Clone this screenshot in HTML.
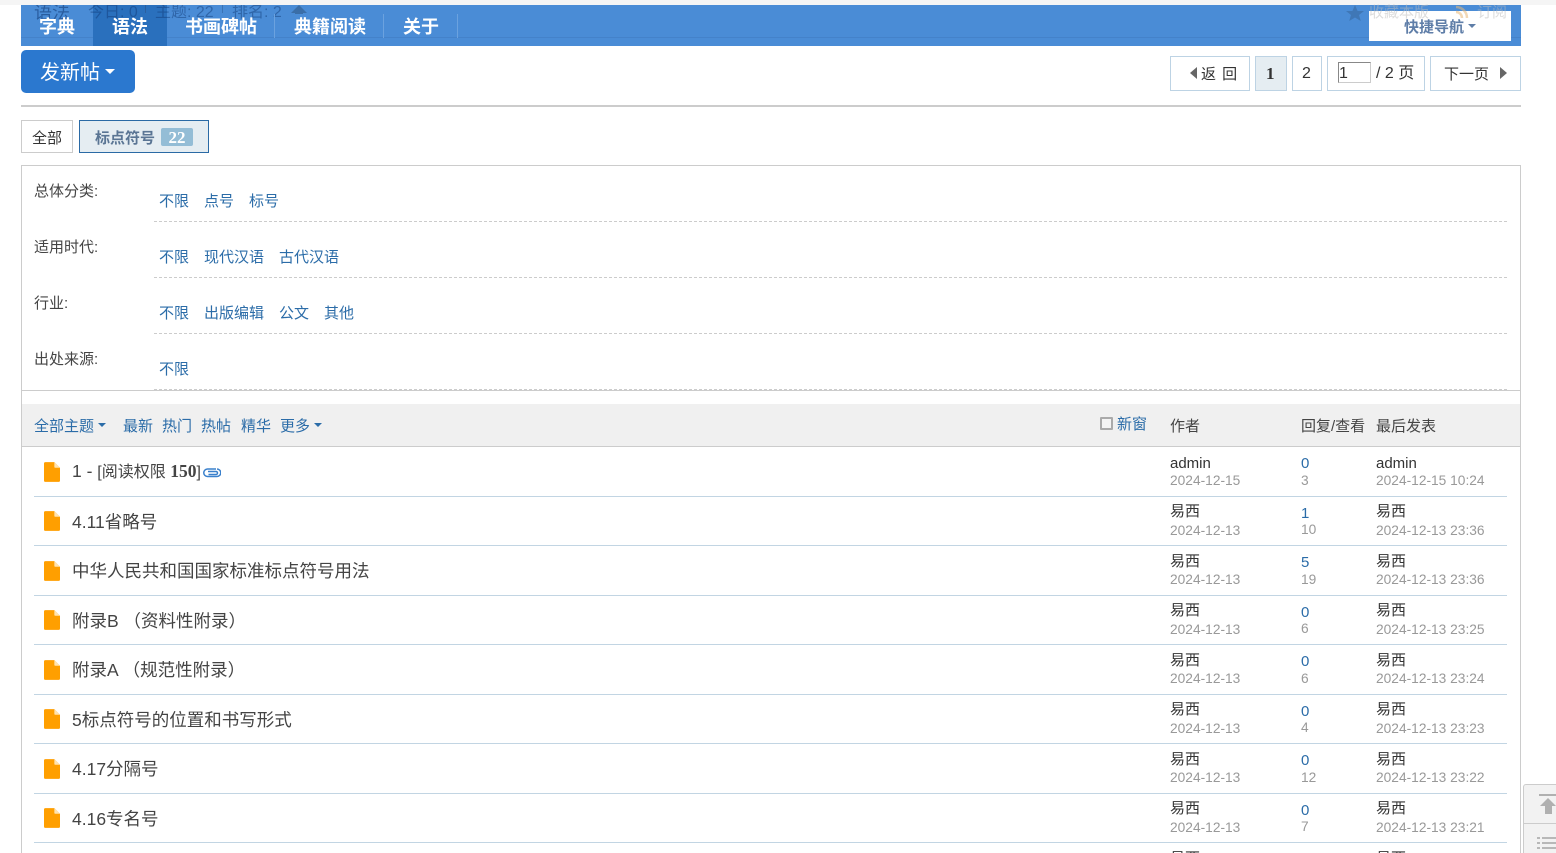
<!DOCTYPE html>
<html lang="zh"><head><meta charset="utf-8"><title>语法</title>
<style>
html,body{margin:0;padding:0;background:#fff;width:1556px;height:853px;overflow:hidden}
#w{position:relative;width:1556px;height:853px;overflow:hidden;font-family:"Liberation Sans","Noto Sans CJK SC",sans-serif;color:#333}
.a,.t{position:absolute;white-space:nowrap}
.t{line-height:20px;margin-top:1px}
.nav{color:#fff;font-weight:700;font-size:18px;line-height:26px;top:14px}
.b{position:absolute;box-sizing:border-box;border:1px solid #bdd3e4;background:#fff}
.lk{color:#2b6ca8;font-size:15px}
.lb{color:#444;font-size:15px}
.dash{position:absolute;left:154px;width:1353px;border-top:1px dashed #ccc}
.sep{position:absolute;left:34px;width:1473px;height:1px;background:#c2d5e3}
.ti{font-size:17.5px;color:#444;left:72px;line-height:26px}
.u{font-size:15px;color:#333}
.d{font-size:13.75px;color:#999}
.n{font-size:15px;color:#2b6ca8}
.h{font-size:16px;color:rgba(15,55,115,.45)}
.g{font-size:15px;color:rgba(187,187,187,.5)}
svg{position:absolute;display:block}
</style></head><body><div id="w">
<div class="a" style="left:21px;top:5px;width:1500px;height:41px;background:#4a8cd6"></div>
<div class="a" style="left:21px;top:37px;width:1500px;height:1px;background:#4482ca"></div>
<div class="a" style="left:93px;top:5px;width:74px;height:41px;background:#2a70bd"></div>
<div class="t" style="left:34px;top:2px;font-size:18px;color:rgba(15,55,115,.55)">语法</div>
<div class="t h" style="left:88px;top:2px">今日: 0</div>
<div class="t h" style="left:155px;top:2px">主题: 22</div>
<div class="t h" style="left:232px;top:2px">排名: 2</div>
<div class="a" style="left:145px;top:5px;width:1px;height:8px;background:#2a5f9f"></div>
<div class="a" style="left:222px;top:5px;width:1px;height:8px;background:#3a73b5"></div>
<svg style="left:290px;top:5px" width="18" height="9"><path d="M9 0L17 8H13V9H5V8H1Z" fill="#3a6ea8"/></svg>
<div class="a" style="left:0;top:0;width:1556px;height:5px;background:#f5f5f5"></div>
<div class="a nav" style="left:39px">字典</div>
<div class="a nav" style="left:112px">语法</div>
<div class="a nav" style="left:185px">书画碑帖</div>
<div class="a nav" style="left:294px">典籍阅读</div>
<div class="a nav" style="left:403px">关于</div>
<div class="a" style="left:274px;top:14px;width:1px;height:24px;background:#6ba2df"></div>
<div class="a" style="left:383px;top:14px;width:1px;height:24px;background:#6ba2df"></div>
<div class="a" style="left:457px;top:14px;width:1px;height:24px;background:#6ba2df"></div>
<svg style="left:1346px;top:4px" width="18" height="17"><path d="M9 1L11.600 7H18L13 11L14.800 17L9 13.500L3.200 17L5 11L0 7H6.400Z" fill="#3f77b6"/></svg>
<div class="a" style="left:1369px;top:11px;width:142px;height:30px;background:#fff"></div>
<div class="t g" style="left:1369px;top:2px">收藏本版</div>
<div class="t g" style="left:1477px;top:2px">订阅</div>
<svg style="left:1456px;top:5px" width="14" height="13"><path d="M0 2A11 11 0 0 1 11 13M0 7A6 6 0 0 1 6 13" stroke="#e8b878" stroke-opacity=".55" stroke-width="2.500" fill="none"/></svg>
<div class="t" style="left:1404px;top:17px;font-size:15px;font-weight:700;color:#5f7ea8">快捷导航</div>
<svg style="left:1468px;top:24px" width="8" height="4"><path d="M0 0H8L4 4Z" fill="#5f7ea8"/></svg>

<div class="a" style="left:21px;top:50px;width:114px;height:43px;background:#2b78cf;border-radius:5px"></div>
<div class="t" style="left:40px;top:62px;font-size:20px;color:#fff">发新帖</div>
<svg style="left:105px;top:69px" width="10" height="5"><path d="M0 0H10L5 5Z" fill="#fff"/></svg>

<div class="b" style="left:1170px;top:56px;width:80px;height:35px"></div>
<svg style="left:1190px;top:67px" width="7" height="12"><path d="M7 0V12L0 6Z" fill="#666"/></svg>
<div class="t" style="left:1201px;top:64px;font-size:15px;letter-spacing:1px">返 回</div>
<div class="b" style="left:1255px;top:56px;width:32px;height:35px;background:#e5edf2"></div>
<div class="t" style="left:1266px;top:63px;font-size:17px;font-weight:700;font-family:'Liberation Serif',serif">1</div>
<div class="b" style="left:1292px;top:56px;width:30px;height:35px"></div>
<div class="t" style="left:1302px;top:63px;font-size:16px">2</div>
<div class="b" style="left:1327px;top:56px;width:98px;height:35px"></div>
<div class="a" style="left:1338px;top:62px;width:33px;height:21px;box-sizing:border-box;border:1px solid #ccc;border-left-color:#888;border-top-color:#888"></div>
<div class="t" style="left:1339px;top:63px;font-size:16px">1</div>
<div class="t" style="left:1376px;top:63px;font-size:16px">/ 2 页</div>
<div class="b" style="left:1430px;top:56px;width:91px;height:35px"></div>
<div class="t" style="left:1444px;top:64px;font-size:15px">下一页</div>
<svg style="left:1500px;top:67px" width="7" height="12"><path d="M0 0V12L7 6Z" fill="#666"/></svg>

<div class="a" style="left:21px;top:105px;width:1500px;height:2px;background:#ccc"></div>

<div class="a" style="left:21px;top:120px;width:52px;height:33px;box-sizing:border-box;border:1px solid #ccc"></div>
<div class="t" style="left:32px;top:128px;font-size:15px">全部</div>
<div class="a" style="left:79px;top:120px;width:130px;height:33px;box-sizing:border-box;border:1px solid #2a6aa5;background:#e5edf2"></div>
<div class="t" style="left:95px;top:128px;font-size:15px;font-weight:700;color:#5a7594">标点符号</div>
<div class="a" style="left:161px;top:128px;width:32px;height:18px;background:#94bdd6;border-radius:2px;color:#fff;font-weight:700;font-size:17px;line-height:19px;text-align:center;font-family:'Liberation Serif',serif">22</div>

<div class="a" style="left:21px;top:165px;width:1500px;height:688px;box-sizing:border-box;border:1px solid #ccc;border-bottom:none"></div>

<div class="t lb" style="left:34px;top:181px">总体分类:</div>
<div class="t lk" style="left:159px;top:191px">不限</div><div class="t lk" style="left:204px;top:191px">点号</div><div class="t lk" style="left:249px;top:191px">标号</div>
<div class="dash" style="top:221px"></div>
<div class="t lb" style="left:34px;top:237px">适用时代:</div>
<div class="t lk" style="left:159px;top:247px">不限</div><div class="t lk" style="left:204px;top:247px">现代汉语</div><div class="t lk" style="left:279px;top:247px">古代汉语</div>
<div class="dash" style="top:277px"></div>
<div class="t lb" style="left:34px;top:293px">行业:</div>
<div class="t lk" style="left:159px;top:303px">不限</div><div class="t lk" style="left:204px;top:303px">出版编辑</div><div class="t lk" style="left:279px;top:303px">公文</div><div class="t lk" style="left:324px;top:303px">其他</div>
<div class="dash" style="top:333px"></div>
<div class="t lb" style="left:34px;top:349px">出处来源:</div>
<div class="t lk" style="left:159px;top:359px">不限</div>
<div class="dash" style="top:389px"></div>
<div class="a" style="left:22px;top:390px;width:1498px;height:1px;background:#ccc"></div>

<div class="a" style="left:22px;top:404px;width:1498px;height:42px;background:#f0f0f0"></div>
<div class="a" style="left:22px;top:446px;width:1498px;height:1px;background:#ccc"></div>
<div class="t lk" style="left:34px;top:416px">全部主题</div>
<svg style="left:98px;top:423px" width="8" height="4"><path d="M0 0H8L4 4Z" fill="#2b6ca8"/></svg>
<div class="t lk" style="left:123px;top:416px">最新</div>
<div class="t lk" style="left:162px;top:416px">热门</div>
<div class="t lk" style="left:201px;top:416px">热帖</div>
<div class="t lk" style="left:241px;top:416px">精华</div>
<div class="t lk" style="left:280px;top:416px">更多</div>
<svg style="left:314px;top:423px" width="8" height="4"><path d="M0 0H8L4 4Z" fill="#2b6ca8"/></svg>
<div class="a" style="left:1100px;top:417px;width:13px;height:13px;box-sizing:border-box;border:2px solid #aaa;border-radius:1px;background:#f4f4f4"></div>
<div class="t lk" style="left:1117px;top:414px">新窗</div>
<div class="t lb" style="left:1170px;top:416px">作者</div>
<div class="t lb" style="left:1301px;top:416px">回复/查看</div>
<div class="t lb" style="left:1376px;top:416px">最后发表</div>

<div class="sep" style="top:496px"></div><div class="sep" style="top:545px"></div><div class="sep" style="top:595px"></div><div class="sep" style="top:644px"></div><div class="sep" style="top:694px"></div><div class="sep" style="top:743px"></div><div class="sep" style="top:793px"></div><div class="sep" style="top:842px"></div>

<svg style="left:44px;top:462px" width="16" height="20" viewBox="0 0 17 21"><path d="M1.500 0H11L17 6V19.500A1.500 1.500 0 0 1 15.500 21H1.500A1.500 1.500 0 0 1 0 19.500V1.500A1.500 1.500 0 0 1 1.500 0Z" fill="#ff9f00"/><path d="M11 0L17 6H12A1 1 0 0 1 11 5Z" fill="#ffe3b0"/></svg>
<svg style="left:44px;top:511px" width="16" height="20" viewBox="0 0 17 21"><path d="M1.500 0H11L17 6V19.500A1.500 1.500 0 0 1 15.500 21H1.500A1.500 1.500 0 0 1 0 19.500V1.500A1.500 1.500 0 0 1 1.500 0Z" fill="#ff9f00"/><path d="M11 0L17 6H12A1 1 0 0 1 11 5Z" fill="#ffe3b0"/></svg>
<svg style="left:44px;top:561px" width="16" height="20" viewBox="0 0 17 21"><path d="M1.500 0H11L17 6V19.500A1.500 1.500 0 0 1 15.500 21H1.500A1.500 1.500 0 0 1 0 19.500V1.500A1.500 1.500 0 0 1 1.500 0Z" fill="#ff9f00"/><path d="M11 0L17 6H12A1 1 0 0 1 11 5Z" fill="#ffe3b0"/></svg>
<svg style="left:44px;top:610px" width="16" height="20" viewBox="0 0 17 21"><path d="M1.500 0H11L17 6V19.500A1.500 1.500 0 0 1 15.500 21H1.500A1.500 1.500 0 0 1 0 19.500V1.500A1.500 1.500 0 0 1 1.500 0Z" fill="#ff9f00"/><path d="M11 0L17 6H12A1 1 0 0 1 11 5Z" fill="#ffe3b0"/></svg>
<svg style="left:44px;top:660px" width="16" height="20" viewBox="0 0 17 21"><path d="M1.500 0H11L17 6V19.500A1.500 1.500 0 0 1 15.500 21H1.500A1.500 1.500 0 0 1 0 19.500V1.500A1.500 1.500 0 0 1 1.500 0Z" fill="#ff9f00"/><path d="M11 0L17 6H12A1 1 0 0 1 11 5Z" fill="#ffe3b0"/></svg>
<svg style="left:44px;top:709px" width="16" height="20" viewBox="0 0 17 21"><path d="M1.500 0H11L17 6V19.500A1.500 1.500 0 0 1 15.500 21H1.500A1.500 1.500 0 0 1 0 19.500V1.500A1.500 1.500 0 0 1 1.500 0Z" fill="#ff9f00"/><path d="M11 0L17 6H12A1 1 0 0 1 11 5Z" fill="#ffe3b0"/></svg>
<svg style="left:44px;top:759px" width="16" height="20" viewBox="0 0 17 21"><path d="M1.500 0H11L17 6V19.500A1.500 1.500 0 0 1 15.500 21H1.500A1.500 1.500 0 0 1 0 19.500V1.500A1.500 1.500 0 0 1 1.500 0Z" fill="#ff9f00"/><path d="M11 0L17 6H12A1 1 0 0 1 11 5Z" fill="#ffe3b0"/></svg>
<svg style="left:44px;top:808px" width="16" height="20" viewBox="0 0 17 21"><path d="M1.500 0H11L17 6V19.500A1.500 1.500 0 0 1 15.500 21H1.500A1.500 1.500 0 0 1 0 19.500V1.500A1.500 1.500 0 0 1 1.500 0Z" fill="#ff9f00"/><path d="M11 0L17 6H12A1 1 0 0 1 11 5Z" fill="#ffe3b0"/></svg>

<div class="a ti" style="top:458px">1 - <span style="font-size:16px">[阅读权限 <b style="font-family:'Liberation Serif',serif;font-size:17.500px">150</b>]</span></div>
<svg style="left:203px;top:467px" width="18" height="12"><path d="M5 4.500H13A1.500 1.500 0 0 1 13 7.500H5.500" fill="none" stroke="#3a80cc" stroke-width="1.500"/><path d="M13 2H4.500A3.500 3.500 0 0 0 4.500 9.500H14A3 3 0 0 0 14 2" fill="none" stroke="#3a80cc" stroke-width="1.500"/></svg>
<div class="a ti" style="top:509px">4.11省略号</div>
<div class="a ti" style="top:558px">中华人民共和国国家标准标点符号用法</div>
<div class="a ti" style="top:608px">附录B （资料性附录）</div>
<div class="a ti" style="top:657px">附录A （规范性附录）</div>
<div class="a ti" style="top:707px">5标点符号的位置和书写形式</div>
<div class="a ti" style="top:756px">4.17分隔号</div>
<div class="a ti" style="top:806px">4.16专名号</div>

<div class="t u" style="left:1170px;top:453px">admin</div><div class="t d" style="left:1170px;top:470px">2024-12-15</div><div class="t n" style="left:1301px;top:453px">0</div><div class="t d" style="left:1301px;top:470px">3</div><div class="t u" style="left:1376px;top:453px">admin</div><div class="t d" style="left:1376px;top:470px">2024-12-15 10:24</div>
<div class="t u" style="left:1170px;top:501px">易西</div><div class="t d" style="left:1170px;top:520px">2024-12-13</div><div class="t n" style="left:1301px;top:503px">1</div><div class="t d" style="left:1301px;top:519px">10</div><div class="t u" style="left:1376px;top:501px">易西</div><div class="t d" style="left:1376px;top:520px">2024-12-13 23:36</div>
<div class="t u" style="left:1170px;top:551px">易西</div><div class="t d" style="left:1170px;top:569px">2024-12-13</div><div class="t n" style="left:1301px;top:552px">5</div><div class="t d" style="left:1301px;top:569px">19</div><div class="t u" style="left:1376px;top:551px">易西</div><div class="t d" style="left:1376px;top:569px">2024-12-13 23:36</div>
<div class="t u" style="left:1170px;top:600px">易西</div><div class="t d" style="left:1170px;top:619px">2024-12-13</div><div class="t n" style="left:1301px;top:602px">0</div><div class="t d" style="left:1301px;top:618px">6</div><div class="t u" style="left:1376px;top:600px">易西</div><div class="t d" style="left:1376px;top:619px">2024-12-13 23:25</div>
<div class="t u" style="left:1170px;top:650px">易西</div><div class="t d" style="left:1170px;top:668px">2024-12-13</div><div class="t n" style="left:1301px;top:651px">0</div><div class="t d" style="left:1301px;top:668px">6</div><div class="t u" style="left:1376px;top:650px">易西</div><div class="t d" style="left:1376px;top:668px">2024-12-13 23:24</div>
<div class="t u" style="left:1170px;top:699px">易西</div><div class="t d" style="left:1170px;top:718px">2024-12-13</div><div class="t n" style="left:1301px;top:701px">0</div><div class="t d" style="left:1301px;top:717px">4</div><div class="t u" style="left:1376px;top:699px">易西</div><div class="t d" style="left:1376px;top:718px">2024-12-13 23:23</div>
<div class="t u" style="left:1170px;top:749px">易西</div><div class="t d" style="left:1170px;top:767px">2024-12-13</div><div class="t n" style="left:1301px;top:750px">0</div><div class="t d" style="left:1301px;top:767px">12</div><div class="t u" style="left:1376px;top:749px">易西</div><div class="t d" style="left:1376px;top:767px">2024-12-13 23:22</div>
<div class="t u" style="left:1170px;top:798px">易西</div><div class="t d" style="left:1170px;top:817px">2024-12-13</div><div class="t n" style="left:1301px;top:800px">0</div><div class="t d" style="left:1301px;top:816px">7</div><div class="t u" style="left:1376px;top:798px">易西</div><div class="t d" style="left:1376px;top:817px">2024-12-13 23:21</div>
<div class="t u" style="left:1170px;top:848px">易西</div><div class="t u" style="left:1376px;top:848px">易西</div>

<div class="a" style="left:1523px;top:784px;width:40px;height:80px;box-sizing:border-box;border:1px solid #ccc;border-radius:3px 0 0 0;background:#f2f2f2"></div>
<div class="a" style="left:1524px;top:823px;width:32px;height:1px;background:#ccc"></div>
<svg style="left:1539px;top:794px" width="17" height="21"><path d="M0 0H17V2H0ZM9 4L17 12H13V20H6V12H1Z" fill="#b0b0b0"/></svg>
<svg style="left:1537px;top:836px" width="19" height="14"><path d="M0 1H3V3H0ZM5 1H19V3H5ZM0 6H3V8H0ZM5 6H19V8H5ZM0 11H3V13H0ZM5 11H19V13H5Z" fill="#b8b8b8"/></svg>
</div></body></html>
